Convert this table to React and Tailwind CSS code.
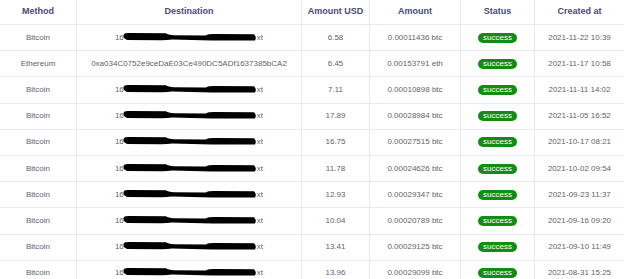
import React from "react";

const rows = [
  ["Bitcoin", null, "6.58", "0.00011436 btc", "2021-11-22 10:39"],
  ["Ethereum", "0xa034C0752e9ceDaE03Ce490DC5ADf1637385bCA2", "6.45", "0.00153791 eth", "2021-11-17 10:58"],
  ["Bitcoin", null, "7.11", "0.00010898 btc", "2021-11-11 14:02"],
  ["Bitcoin", null, "17.89", "0.00028984 btc", "2021-11-05 16:52"],
  ["Bitcoin", null, "16.75", "0.00027515 btc", "2021-10-17 08:21"],
  ["Bitcoin", null, "11.78", "0.00024626 btc", "2021-10-02 09:54"],
  ["Bitcoin", null, "12.93", "0.00029347 btc", "2021-09-23 11:37"],
  ["Bitcoin", null, "10.04", "0.00020789 btc", "2021-09-16 09:20"],
  ["Bitcoin", null, "13.41", "0.00029125 btc", "2021-09-10 11:49"],
  ["Bitcoin", null, "13.96", "0.00029099 btc", "2021-08-31 15:25"],
];

function Redacted() {
  return (
    <span className="inline-flex items-center">
      <span>16</span>
      <svg width="136" height="10" viewBox="0 0 136 10" className="-ml-[2px] -mt-[2px]">
        <path
          d="M2 2 Q3 0.8 8 1 L44 1.2 Q46 2.6 52 3.2 L84 3.4 Q86 2 92 2 L132 2.2 Q135 5 133 8.4 L90 8.6 Q70 7.6 50 7.4 Q44 8.4 38 8.2 L5 8 Q0 6 2 2 Z"
          fill="#000"
        />
      </svg>
      <span className="-ml-[1px]">xt</span>
    </span>
  );
}

export default function App() {
  const cols = "grid grid-cols-[77px_225px_68px_91px_74px_89px]";
  const cell = "flex items-center justify-center border-r border-[#e7e7f7]";
  return (
    <div className="w-[624px] h-[279px] overflow-hidden bg-white font-['Liberation_Sans',Arial,sans-serif]">
      <div className={`${cols} h-[25px] border-b border-[#e7e7f7] text-[9px] font-bold text-[#4a4a78]`}>
        <div className={cell}>Method</div>
        <div className={cell}>Destination</div>
        <div className={cell}>Amount USD</div>
        <div className={cell}>Amount</div>
        <div className={cell}>Status</div>
        <div className="flex items-center justify-center">Created at</div>
      </div>
      {rows.map((r, i) => (
        <div key={i} className={`${cols} h-[26.2px] border-b border-[#e7e7f7] text-[8px] text-[#5f5f6e]`}>
          <div className={cell}>{r[0]}</div>
          <div className={cell}>{r[1] ? r[1] : <Redacted />}</div>
          <div className={cell}>{r[2]}</div>
          <div className={cell}>{r[3]}</div>
          <div className={cell}>
            <span className="rounded-full bg-[#148c14] px-[5px] h-[10px] leading-[10px] text-[8px] text-white">success</span>
          </div>
          <div className="flex items-center justify-center">{r[4]}</div>
        </div>
      ))}
    </div>
  );
}
